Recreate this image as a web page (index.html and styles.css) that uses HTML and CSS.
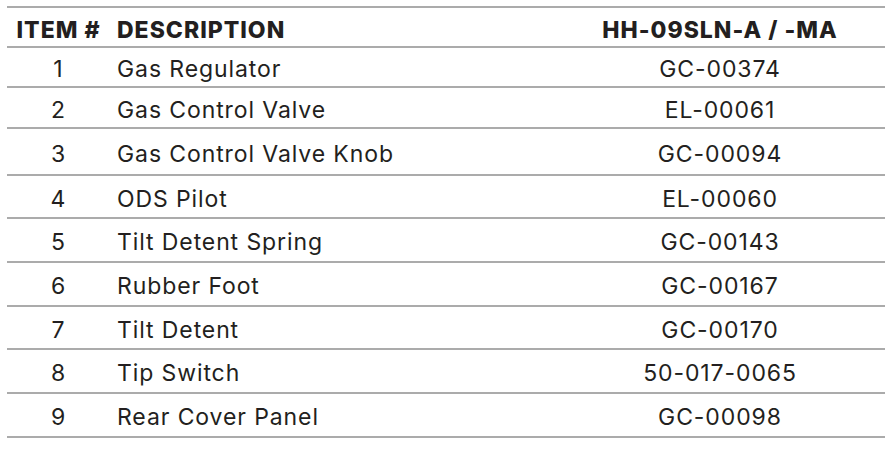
FILE: index.html
```html
<!DOCTYPE html>
<html>
<head>
<meta charset="utf-8">
<link rel="stylesheet" href="styles.css">
</head>
<body>
<div class="parts">
  <div class="row head h0">
    <div class="num">ITEM #</div>
    <div class="desc">DESCRIPTION</div>
    <div class="code">HH-09SLN-A / -MA</div>
  </div>
  <div class="row h1"><div class="num">1</div><div class="desc">Gas Regulator</div><div class="code">GC-00374</div></div>
  <div class="row h2"><div class="num">2</div><div class="desc">Gas Control Valve</div><div class="code">EL-00061</div></div>
  <div class="row h3"><div class="num">3</div><div class="desc">Gas Control Valve Knob</div><div class="code">GC-00094</div></div>
  <div class="row h4"><div class="num">4</div><div class="desc">ODS Pilot</div><div class="code">EL-00060</div></div>
  <div class="row h5"><div class="num">5</div><div class="desc">Tilt Detent Spring</div><div class="code">GC-00143</div></div>
  <div class="row h6"><div class="num">6</div><div class="desc">Rubber Foot</div><div class="code">GC-00167</div></div>
  <div class="row h7"><div class="num">7</div><div class="desc">Tilt Detent</div><div class="code">GC-00170</div></div>
  <div class="row h8"><div class="num">8</div><div class="desc">Tip Switch</div><div class="code">50-017-0065</div></div>
  <div class="row h9"><div class="num">9</div><div class="desc">Rear Cover Panel</div><div class="code">GC-00098</div></div>
</div>
</body>
</html>
```

FILE: styles.css
```css
html, body {
  margin: 0;
  padding: 0;
  background: #ffffff;
}
body {
  font-family: "Inter", "Open Sans", sans-serif;
  color: #231f20;
}
.parts {
  margin: 6px 0 0 7px;
  width: 878px;
  border-top: 2px solid #ababab;
}
.row {
  display: grid;
  grid-template-columns: 103px 445px 330px;
  align-items: center;
  border-bottom: 2px solid #ababab;
  box-sizing: border-box;
  font-size: 23px;
  letter-spacing: 0.9px;
  padding-top: 4px;
}
.head {
  font-weight: 800;
  letter-spacing: 1px;
  padding-top: 5px;
}
.num { text-align: center; }
.desc { padding-left: 7px; }
.code { text-align: center; }
.h0 { height: 40px; }
.h1 { height: 40px; }
.h2 { height: 41px; }
.h3 { height: 47px; }
.h4 { height: 43px; }
.h5 { height: 44px; }
.h6 { height: 44px; }
.h7 { height: 43px; }
.h8 { height: 44px; }
.h9 { height: 44px; }
```
